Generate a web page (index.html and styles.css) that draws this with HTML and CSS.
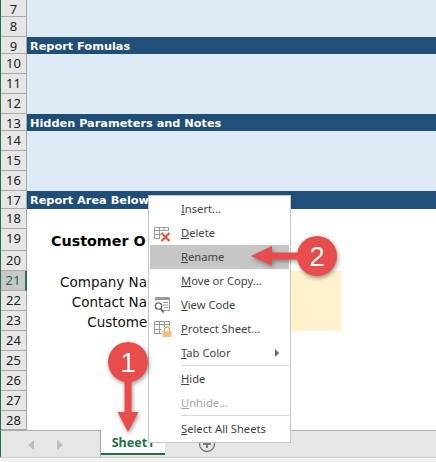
FILE: index.html
```html
<!DOCTYPE html>
<html lang="en">

<head>
    <meta charset="UTF-8">
    <meta name="viewport" content="width=device-width, initial-scale=1.0">
    <title>Rename Sheet</title>
    <link rel="stylesheet" href="styles.css">
</head>

<body>
    <div id="sheet">
        <div class="row short"><div class="num">7</div><div class="cell blue"></div></div>
        <div class="row"><div class="num">8</div><div class="cell blue"></div></div>
        <div class="row short"><div class="num">9</div><div class="cell band">Report Fomulas</div></div>
        <div class="row"><div class="num">10</div><div class="cell blue"></div></div>
        <div class="row"><div class="num">11</div><div class="cell blue"></div></div>
        <div class="row"><div class="num">12</div><div class="cell blue"></div></div>
        <div class="row short"><div class="num">13</div><div class="cell band">Hidden Parameters and Notes</div></div>
        <div class="row"><div class="num">14</div><div class="cell blue"></div></div>
        <div class="row"><div class="num">15</div><div class="cell blue"></div></div>
        <div class="row"><div class="num">16</div><div class="cell blue"></div></div>
        <div class="row mid"><div class="num">17</div><div class="cell band">Report Area Below</div></div>
        <div class="row"><div class="num">18</div><div class="cell"></div></div>
        <div class="row tall"><div class="num">19</div><div class="cell title">Customer O</div></div>
        <div class="row"><div class="num">20</div><div class="cell"></div></div>
        <div class="row"><div class="num active">21</div><div class="cell"><div class="label">Company Name:</div><div class="value"></div></div></div>
        <div class="row"><div class="num">22</div><div class="cell"><div class="label">Contact Name:</div><div class="value"></div></div></div>
        <div class="row"><div class="num">23</div><div class="cell"><div class="label">Customer #:</div><div class="value"></div></div></div>
        <div class="row"><div class="num">24</div><div class="cell"></div></div>
        <div class="row"><div class="num">25</div><div class="cell"></div></div>
        <div class="row"><div class="num">26</div><div class="cell"></div></div>
        <div class="row"><div class="num">27</div><div class="cell"></div></div>
        <div class="row last"><div class="num">28</div><div class="cell"></div></div>
    </div>

    <div id="tabbar">
        <div class="tab-nav">
            <svg width="99" height="24" viewBox="0 0 99 24">
                <path d="M33 9 L27 14 L33 19 Z" fill="#bdbdbd" />
                <path d="M56 9 L62 14 L56 19 Z" fill="#bdbdbd" />
            </svg>
        </div>
        <div class="tab">Sheet1</div>
        <div class="tab-add">
            <svg width="18" height="18" viewBox="0 0 18 18">
                <circle cx="9" cy="9" r="7.500" fill="none" stroke="#7a7a7a" stroke-width="1.400" />
                <path d="M9 5 V13 M5 9 H13" stroke="#7a7a7a" stroke-width="2" />
            </svg>
        </div>
    </div>
    <div id="status"></div>

    <div id="menu">
        <div class="item"><span class="icon"></span><span><u>I</u>nsert...</span></div>
        <div class="item">
            <span class="icon">
                <svg width="24" height="18" viewBox="0 0 24 18">
                    <path d="M2.500 3.500 H16.500 V7 M2.500 3.500 V14.500 H8 M2.500 6.500 H16.500 M2.500 10.500 H9 M7.500 3.500 V14.500 M12 3.500 V7" fill="none" stroke="#9a9a9a" />
                    <path d="M9.500 9 L17.500 17 M17.500 9 L9.500 17" stroke="#dc5a38" stroke-width="2.200" />
                </svg>
            </span><span><u>D</u>elete</span>
        </div>
        <div class="item on"><span class="icon"></span><span><u>R</u>ename</span></div>
        <div class="item"><span class="icon"></span><span><u>M</u>ove or Copy...</span></div>
        <div class="item">
            <span class="icon">
                <svg width="24" height="18" viewBox="0 0 24 18">
                    <path d="M3.500 5 V1.500 H17.500 V14.500 H11" fill="none" stroke="#9a9a9a" />
                    <path d="M3.500 3 H17.500" stroke="#9a9a9a" stroke-width="2" />
                    <path d="M11 6.500 H16 M11 9 H16 M12 11.500 H16" stroke="#9a9a9a" />
                    <circle cx="6.500" cy="10" r="3.200" fill="#fff" stroke="#666" stroke-width="1.300" />
                    <path d="M8.800 12.500 L11.500 16.500" stroke="#666" stroke-width="1.800" />
                </svg>
            </span><span><u>V</u>iew Code</span>
        </div>
        <div class="item">
            <span class="icon">
                <svg width="24" height="20" viewBox="0 0 24 20">
                    <path d="M2.500 2.500 H17.500 V7 M2.500 2.500 V14.500 H9.500 M2.500 5.500 H17.500 M2.500 10.500 H9.500 M7.500 2.500 V14.500 M12.500 2.500 V8" fill="none" stroke="#9a9a9a" />
                    <path d="M12.500 12 V10.500 A2.500 2.500 0 0 1 17.500 10.500 V12" fill="none" stroke="#d8b06a" stroke-width="1.300" />
                    <rect x="10.500" y="12" width="9" height="6" fill="#f0c27b" />
                </svg>
            </span><span><u>P</u>rotect Sheet...</span>
        </div>
        <div class="item"><span class="icon"></span><span><u>T</u>ab Color</span><span class="arrow"></span></div>
        <div class="sep"></div>
        <div class="item"><span class="icon"></span><span><u>H</u>ide</span></div>
        <div class="item off"><span class="icon"></span><span><u>U</u>nhide...</span></div>
        <div class="sep"></div>
        <div class="item"><span class="icon"></span><span><u>S</u>elect All Sheets</span></div>
    </div>

    <!-- callouts -->
    <svg class="callout one" width="44" height="94" viewBox="0 0 44 94">
        <path d="M18.500 40 H25.500 V72 H32.500 L22 92 L11.500 72 H18.500 Z" fill="#e94c4c" />
        <circle cx="22" cy="22" r="20" fill="#e94c4c" />
        <text x="22" y="32" class="callout-num">1</text>
    </svg>
    <svg class="callout two" width="90" height="44" viewBox="0 0 90 44">
        <path d="M50 18.500 H23 V12 L2 22 L23 31.500 V25.500 H50 Z" fill="#e94c4c" />
        <circle cx="68" cy="22" r="20" fill="#e94c4c" />
        <text x="68" y="32" class="callout-num">2</text>
    </svg>
</body>

</html>
```
FILE: styles.css
```css
html,
body {
    margin: 0;
    padding: 0;
    overflow: hidden;
}

body {
    width: 436px;
    height: 462px;
    position: relative;
    font-family: "Noto Sans", sans-serif;
    background-color: #fff;
}

#sheet {
    height: 430px;
    border-left: 1px solid #217346;
    box-sizing: border-box;
}

.row {
    display: flex;
    height: 20px;
}

.row.short {
    height: 17px;
}

.row.mid {
    height: 18px;
}

.row.tall {
    height: 22px;
}

.row.last {
    height: 19px;
}

.num {
    width: 26px;
    flex: none;
    box-sizing: border-box;
    background-color: #e6e6e6;
    border-right: 1px solid #a9a9a9;
    border-bottom: 1px solid #a9a9a9;
    color: #222;
    font-size: 13px;
    line-height: 19px;
    text-align: center;
}

.num.active {
    background-color: #c9c9c9;
    border-right: 2px solid #217346;
    color: #1e6b41;
}

.cell {
    flex: 1;
    display: flex;
    align-items: center;
    padding-left: 2px;
    min-width: 0;
    white-space: nowrap;
}

.cell.blue {
    background-color: #ddebf7;
}

.cell.band {
    padding-left: 3px;
    padding-top: 1px;
    background-color: #1f4e79;
    color: #fff;
    font-family: "DejaVu Sans", sans-serif;
    font-size: 11.300px;
    font-weight: bold;
}

.cell.title {
    padding-left: 24px;
    padding-top: 1px;
    color: #000;
    font-family: "DejaVu Sans", sans-serif;
    font-size: 14.300px;
    font-weight: bold;
}

.label {
    width: 145px;
    flex: none;
    padding-right: 1px;
    padding-top: 1px;
    box-sizing: border-box;
    color: #111;
    font-family: "DejaVu Sans", sans-serif;
    font-size: 13.500px;
    text-align: right;
}

.value {
    width: 168px;
    height: 100%;
    flex: none;
    background-color: #fff2cc;
}

#tabbar {
    display: flex;
    height: 27px;
    box-sizing: border-box;
    background-color: #e6e6e6;
    border-left: 1px solid #217346;
    border-top: 1px solid #a9a9a9;
}

.tab-nav {
    width: 100px;
    flex: none;
    box-sizing: border-box;
    border-right: 1px solid #a9a9a9;
}

.tab {
    width: 64px;
    height: 25px;
    flex: none;
    margin-top: -1px;
    box-sizing: border-box;
    background-color: #fff;
    border-bottom: 2px solid #217346;
    color: #217346;
    font-size: 12.500px;
    font-weight: bold;
    line-height: 25px;
    text-align: center;
}

.tab-add {
    padding: 4px 0 0 33px;
}

#status {
    height: 5px;
    background-color: #f3f3f3;
    border-top: 1px solid #cfcfcf;
    box-sizing: border-box;
}

#menu {
    position: absolute;
    left: 148px;
    top: 195px;
    width: 143px;
    height: 248px;
    box-sizing: border-box;
    padding: 1px;
    background-color: #fff;
    border: 1px solid #c6c6c6;
    color: #444;
    font-size: 11.200px;
}

.item {
    display: flex;
    align-items: center;
    height: 24px;
    box-sizing: border-box;
}

.item > span:nth-child(2) {
    padding-bottom: 2px;
}

.item.on {
    background-color: #c6c6c6;
}

.item.off {
    color: #a6a6a6;
}

.icon {
    width: 31px;
    flex: none;
    display: flex;
    align-items: center;
    padding-left: 2px;
    box-sizing: border-box;
}

.arrow {
    margin-left: auto;
    margin-right: 10px;
    border-left: 4px solid #666;
    border-top: 4px solid transparent;
    border-bottom: 4px solid transparent;
}

.sep {
    height: 1px;
    margin: 0 0 1px 31px;
    background-color: #d9d9d9;
}

.callout {
    position: absolute;
    filter: drop-shadow(1px 2px 2px rgba(0, 0, 0, 0.4));
}

.callout.one {
    left: 106px;
    top: 340px;
}

.callout.two {
    left: 249px;
    top: 234px;
}

.callout-num {
    fill: #fff;
    font-family: "Liberation Sans", sans-serif;
    font-size: 28px;
    text-anchor: middle;
}
```
